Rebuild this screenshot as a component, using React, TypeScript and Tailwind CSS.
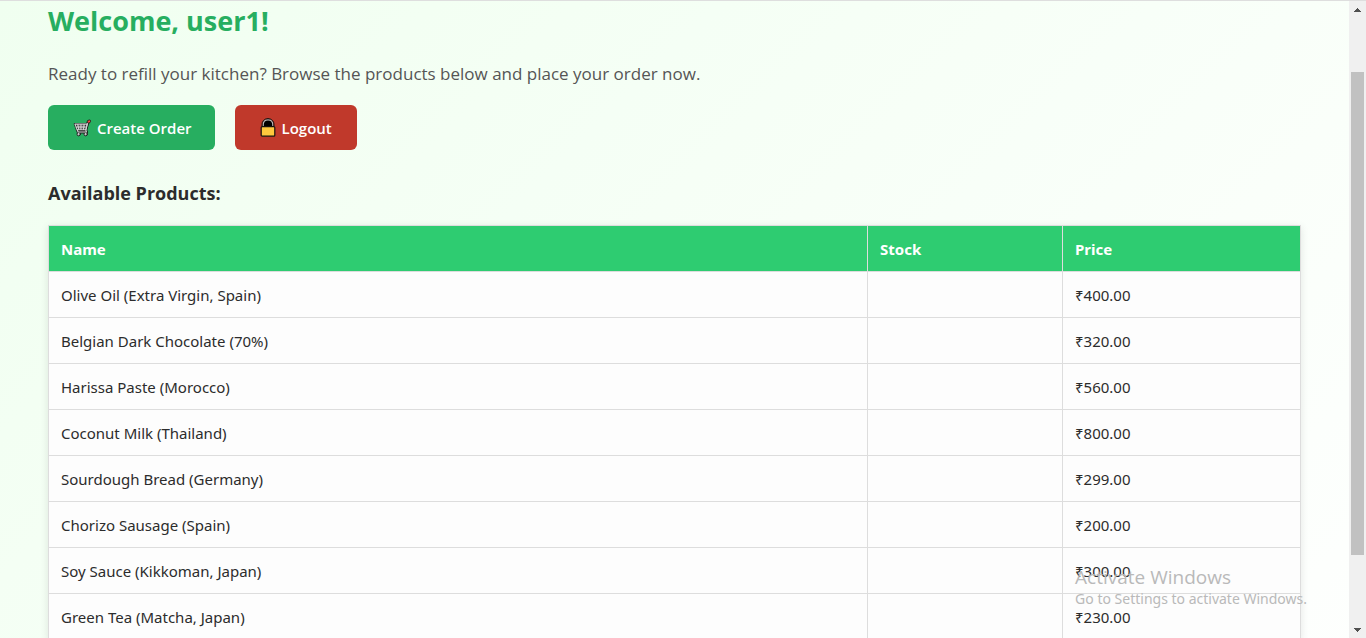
import React from "react";

const products = [
  { name: "Olive Oil (Extra Virgin, Spain)", price: "₹400.00" },
  { name: "Belgian Dark Chocolate (70%)", price: "₹320.00" },
  { name: "Harissa Paste (Morocco)", price: "₹560.00" },
  { name: "Coconut Milk (Thailand)", price: "₹800.00" },
  { name: "Sourdough Bread (Germany)", price: "₹299.00" },
  { name: "Chorizo Sausage (Spain)", price: "₹200.00" },
  { name: "Soy Sauce (Kikkoman, Japan)", price: "₹300.00" },
  { name: "Green Tea (Matcha, Japan)", price: "₹230.00" },
];

function CartIcon() {
  return (
    <svg width="18" height="18" viewBox="0 0 19 19" fill="none" aria-hidden="true" strokeLinecap="round" strokeLinejoin="round">
      <path d="M2 5.4H15L13.4 11.4H4.4Z" fill="#6a6a6a" stroke="#1c1c1c" strokeWidth="2.4" />
      <path d="M16.6 3.2L15.6 4L13.6 11.8L14.4 13.8H5.4L4.4 11.4" stroke="#1c1c1c" strokeWidth="3" />
      <circle cx="6" cy="16" r="1.8" fill="#c8c8c8" stroke="#1c1c1c" />
      <circle cx="13.4" cy="16" r="1.8" fill="#c8c8c8" stroke="#1c1c1c" />
      <path d="M2 5.4H15L13.4 11.4H4.4Z M3 8.4H14.2 M5 5.4L6.2 11.4 M8.4 5.4V11.4 M11.8 5.4L11 11.4" stroke="#d2d2d2" strokeWidth="1.1" />
      <path d="M16.4 3.2L15.4 4.2L13.6 11.8L14.2 13.7H5.4L4.4 11.4" stroke="#d2d2d2" strokeWidth="1.2" />
      <path d="M16.4 2.8L17.2 2.3" stroke="#1c1c1c" strokeWidth="3.4" />
      <path d="M16.5 2.8L17.3 2.3" stroke="#f0493e" strokeWidth="2" />
    </svg>
  );
}

function LockIcon() {
  return (
    <svg width="16" height="20" viewBox="0 0 16 20" fill="none" aria-hidden="true">
      <path d="M2.5 9V6.8C2.5 3.5 4.8 1 8 1S13.5 3.5 13.5 6.8V9Z" fill="#000" />
      <path d="M3.2 9V6.8C3.2 3.8 5.2 1.8 8 1.8S12.8 3.8 12.8 6.8V9" stroke="#b9b9b9" strokeWidth="1.2" />
      <path d="M2 9.5V6.8C2 3 4.4 .6 8 .6S14 3 14 6.8V9.5" stroke="#171310" strokeWidth="1" />
      <rect x="1.2" y="8.6" width="13.6" height="9.6" rx="1" fill="#ffc83d" stroke="#171310" strokeWidth="1.2" />
    </svg>
  );
}

function ScrollTrack() {
  return (
    <div aria-hidden="true" className="flex w-[17px] shrink-0 flex-col items-center bg-[#f0f0f0]">
      <div className="flex h-[17px] shrink-0 items-center">
        <svg width="7" height="4" viewBox="0 0 7 4" shapeRendering="crispEdges">
          <path d="M3 0h1v1h1v1h1v1h1v1H0V3h1V2h1V1h1z" fill="#505050" />
        </svg>
      </div>
      <div className="flex w-full flex-1 flex-col items-center">
        <div className="basis-[9%]" />
        <div className="w-[13px] basis-[80%] bg-[#c1c1c1]" />
      </div>
      <div className="flex h-[17px] shrink-0 items-center">
        <svg width="7" height="4" viewBox="0 0 7 4" shapeRendering="crispEdges">
          <path d="M0 0h7v1H6v1H5v1H4v1H3V3H2V2H1V1H0z" fill="#505050" />
        </svg>
      </div>
    </div>
  );
}

export default function App() {
  return (
    <div className="relative flex h-screen overflow-hidden border-t border-[#dedede] bg-white font-['Noto_Sans','Open_Sans',sans-serif] text-[#2c2c2c]">
      <main className="min-w-0 flex-1 overflow-hidden bg-linear-135 from-[#f0fff0] to-white to-110% px-12">
        <h1 className="font-['Open_Sans','Noto_Sans',sans-serif] text-[27px] leading-10 font-bold text-[#27ae60]">Welcome, user1!</h1>
        <p className="mt-5 font-['Open_Sans','Noto_Sans',sans-serif] text-[17px] leading-[26px] text-[#555555]">
          Ready to refill your kitchen? Browse the products below and place your order now.
        </p>
        <div className="mt-[18px] flex gap-5">
          <button type="button" className="flex h-[45px] items-center gap-[6px] rounded-md bg-[#27ae60] pr-[23px] pl-[25px] pt-px font-['Open_Sans','Noto_Sans',sans-serif] text-[15px] font-semibold text-white">
            <CartIcon />
            Create Order
          </button>
          <button type="button" className="flex h-[45px] items-center gap-[6px] rounded-md bg-[#c0392b] px-[25px] pt-px font-['Open_Sans','Noto_Sans',sans-serif] text-[15px] font-semibold text-white">
            <LockIcon />
            Logout
          </button>
        </div>
        <h2 className="mt-[31px] font-['Open_Sans','Noto_Sans',sans-serif] text-[18px] leading-6 font-bold text-[#2c2c2c]">Available Products:</h2>
        <table className="mt-5 w-full border-collapse bg-[#fdfdfd] text-left text-[15px] leading-[21px] shadow-[0_2px_8px_rgba(0,0,0,0.1)]">
          <thead>
            <tr className="bg-[#2ecc71] text-white">
              <th className="border border-[#dddddd] px-3 pt-[13px] pb-[11px] font-bold">Name</th>
              <th className="w-[195px] border border-[#dddddd] px-3 pt-[13px] pb-[11px] font-bold">Stock</th>
              <th className="w-[238px] border border-[#dddddd] px-3 pt-[13px] pb-[11px] font-bold">Price</th>
            </tr>
          </thead>
          <tbody>
            {products.map((p) => (
              <tr key={p.name}>
                <td className="border border-[#dddddd] px-3 pt-[13px] pb-[11px]">{p.name}</td>
                <td className="border border-[#dddddd] px-3 pt-[13px] pb-[11px]" />
                <td className="border border-[#dddddd] px-3 pt-[13px] pb-[11px]">{p.price}</td>
              </tr>
            ))}
          </tbody>
        </table>
      </main>
      <ScrollTrack />
      <div className="pointer-events-none absolute right-[59px] bottom-[29px] text-[#b9b9b9]">
        <p className="font-['Open_Sans','Noto_Sans',sans-serif] text-[19px] leading-6">Activate Windows</p>
        <p className="text-[14px] leading-5">Go to Settings to activate Windows.</p>
      </div>
    </div>
  );
}
